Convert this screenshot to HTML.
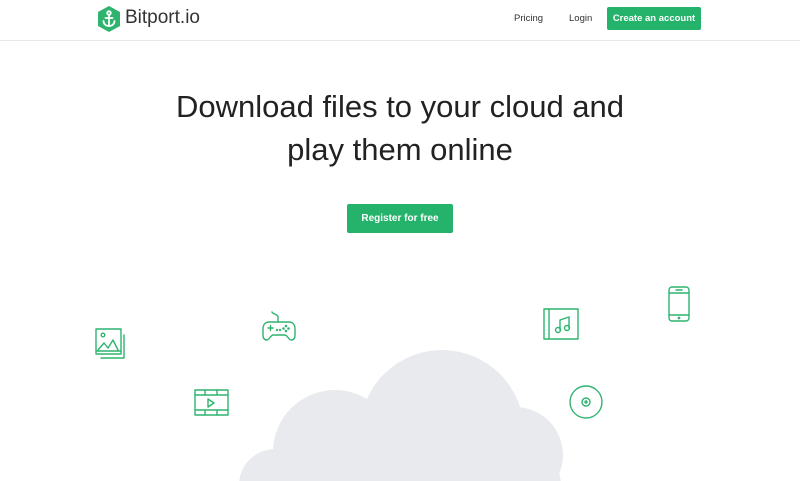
<!DOCTYPE html><html style="overflow:hidden;height:481px"><head><style>
html,body{overflow:hidden}
body{margin:0;width:800px;height:481px;overflow:hidden;background:#fff;font-family:"Liberation Sans",sans-serif;position:relative}
.a{position:absolute}
.nav{font-size:9.5px;color:#333;top:13px}
.btn{background:#25b26b;color:#fff;font-weight:bold;text-align:center;border-radius:2px}
h1{position:absolute;top:85px;left:0;width:800px;margin:0;text-align:center;font-weight:normal;font-size:31px;line-height:43px;color:#222}
svg.i{position:absolute;fill:none;stroke:#2fb36f;stroke-width:1.4;stroke-linecap:round;stroke-linejoin:round}
</style></head><body>
<svg class="a" style="left:97px;top:6px" width="24" height="26" viewBox="0 0 24 26"><polygon points="12,0 23,6 23,20 12,26 1,20 1,6" fill="#2fb36f"/><g stroke="#fff" stroke-width="1.8" fill="none" stroke-linecap="round"><circle cx="12" cy="7" r="1.8"/><line x1="12" y1="9" x2="12" y2="20"/><line x1="8.5" y1="12" x2="15.5" y2="12"/><path d="M6.5 15c0 3 2.5 5 5.5 5s5.5-2 5.5-5"/></g></svg>
<div class="a" style="left:125px;top:7px;font-size:19px;color:#333">Bitport.io</div>
<div class="a nav" style="left:514px">Pricing</div>
<div class="a nav" style="left:569px">Login</div>
<div class="a btn" style="left:607px;top:7px;width:94px;height:23px;line-height:23px;font-size:9.5px">Create an account</div>
<div class="a" style="left:0;top:40px;width:800px;height:1px;background:#e8e8e8"></div>
<h1>Download files to your cloud and<br>play them online</h1>
<div class="a btn" style="left:347px;top:204px;width:106px;height:29px;line-height:29px;font-size:10px">Register for free</div>
<svg class="a" style="left:0;top:0" width="800" height="481"><g fill="#e8eaee"><circle cx="442" cy="432" r="82"/><circle cx="335" cy="452" r="62"/><circle cx="515" cy="455" r="48"/><circle cx="275" cy="485" r="36"/><circle cx="525" cy="485" r="36"/><rect x="275" y="440" width="250" height="45"/></g></svg>
<svg class="i" style="left:93px;top:326px" width="36" height="36" viewBox="0 0 36 36"><rect x="3" y="3" width="25" height="25"/><path d="M31 9v23H8"/><circle cx="10" cy="9" r="1.8"/><path d="M5 24l6-7 4 5 5-8 5 10"/><path d="M4 25h24"/></svg>
<svg class="i" style="left:259px;top:310px" width="40" height="38" viewBox="0 0 40 38"><path d="M19 12V7c0-3-6-3-6-5"/><path d="M10 12h20c4 0 6 3 6 7v6c0 4-2 5-4 5-2 0-4-5-6-5H14c-2 0-4 5-6 5-2 0-4-1-4-5v-6c0-4 2-7 6-7z"/><path d="M9 18h5M11.5 15.5v5"/><circle cx="27" cy="16" r=".6"/><circle cx="27" cy="21" r=".6"/><circle cx="24.5" cy="18.5" r=".6"/><circle cx="29.5" cy="18.5" r=".6"/><circle cx="18" cy="20" r=".5"/><circle cx="21" cy="20" r=".5"/></svg>
<svg class="i" style="left:193px;top:388px" width="36" height="28" viewBox="0 0 36 28"><rect x="2" y="2" width="33" height="25"/><path d="M2 7h33M2 22h33M12 2v5M24 2v5M12 22v5M24 22v5"/><path d="M15 11v8l6-4z"/></svg>
<svg class="i" style="left:542px;top:307px" width="38" height="34" viewBox="0 0 38 34"><rect x="2" y="2" width="34" height="30"/><path d="M7 2v30"/><path d="M18 23V13l9-3v11"/><circle cx="16" cy="23" r="2.5"/><circle cx="25" cy="21" r="2.5"/></svg>
<svg class="i" style="left:666px;top:285px" width="26" height="38" viewBox="0 0 26 38"><rect x="3" y="2" width="20" height="34" rx="3"/><path d="M3 8h20M3 30h20M10 5h6"/><circle cx="13" cy="33" r=".7"/></svg>
<svg class="i" style="left:568px;top:384px" width="36" height="36" viewBox="0 0 36 36"><circle cx="18" cy="18" r="16"/><circle cx="18" cy="18" r="4"/><circle cx="18" cy="18" r="1"/></svg>
</body></html>
